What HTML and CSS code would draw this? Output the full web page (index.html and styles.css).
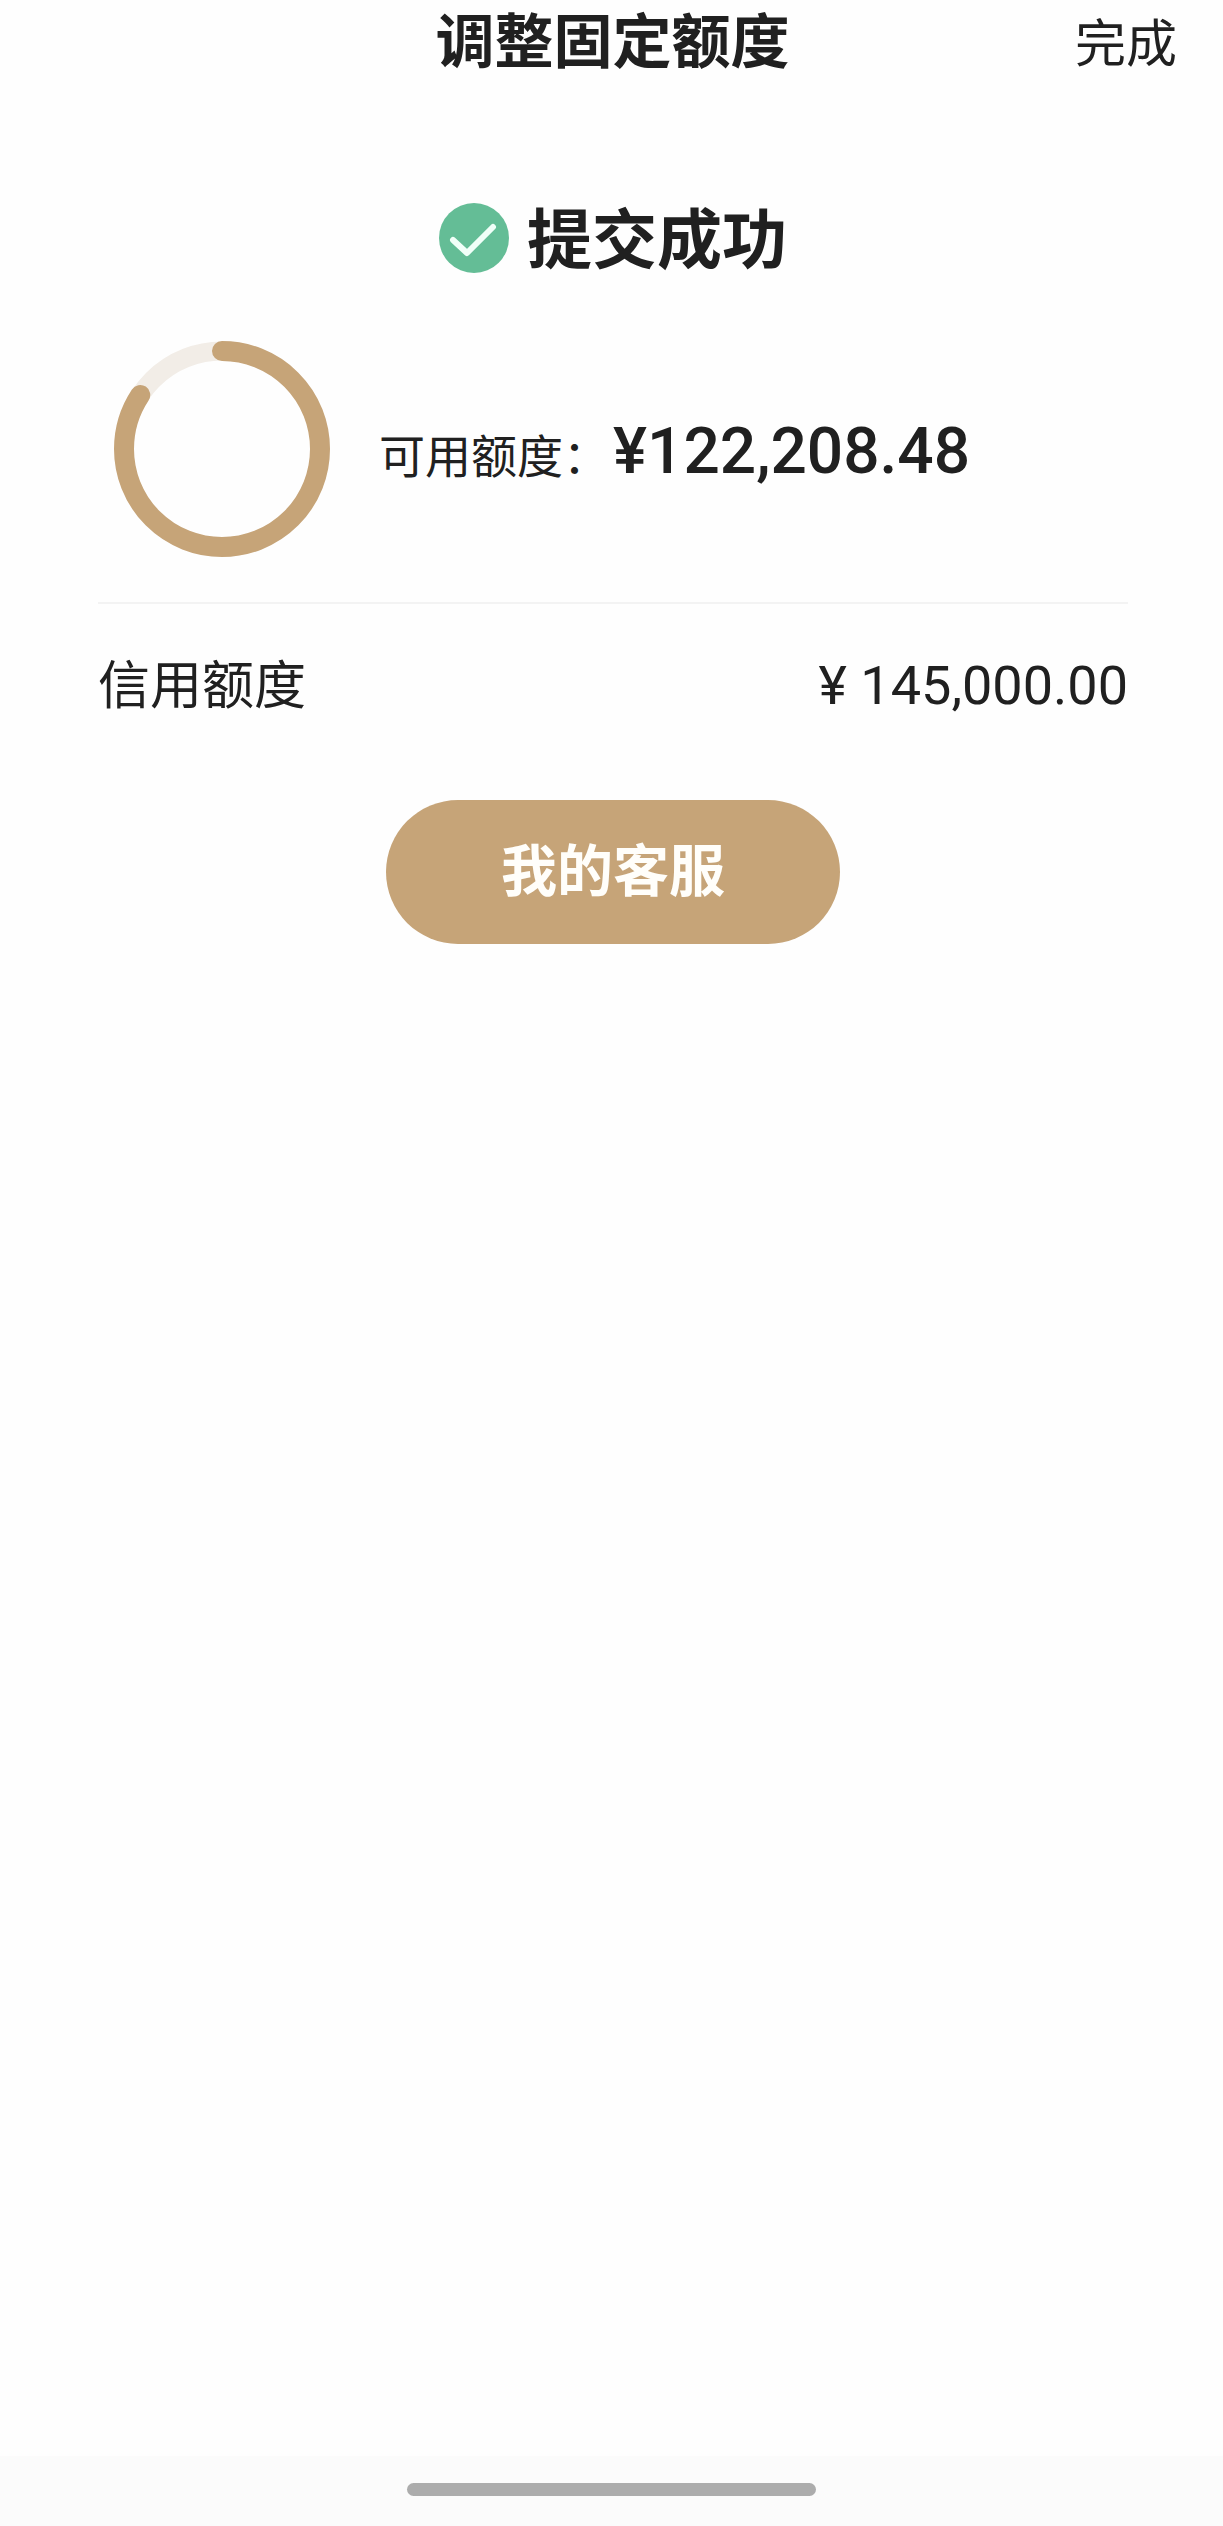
FILE: index.html
```html
<!DOCTYPE html>
<html lang="zh-CN">
<head>
<meta charset="utf-8">
<meta name="viewport" content="width=device-width, initial-scale=1">
<title>调整固定额度</title>
<link rel="stylesheet" href="styles.css">
</head>
<body>
<div class="page">
  <header class="navbar">
    <h1 class="navbar-title">调整固定额度</h1>
    <button class="navbar-done" type="button">完成</button>
  </header>
  <main class="content">
    <div class="status">
      <svg class="status-icon" viewBox="0 0 70 70" aria-hidden="true">
        <circle cx="35" cy="35" r="35" fill="#64bd96"/>
        <path d="M14 37 L28 50 L54 24" fill="none" stroke="#f1fff8" stroke-width="6" stroke-linecap="round" stroke-linejoin="round"/>
      </svg>
      <h2 class="status-text">提交成功</h2>
    </div>
    <section class="available">
      <svg class="ring" viewBox="0 0 216 216" aria-hidden="true">
        <circle cx="108" cy="108" r="98" fill="none" stroke="#f2ede7" stroke-width="19"/>
        <circle cx="108" cy="108" r="98" fill="none" stroke="#c6a478" stroke-width="20" stroke-linecap="round" pathLength="1000" stroke-dasharray="843 1000" transform="rotate(-90 108 108)"/>
      </svg>
      <p class="available-line"><span class="available-label">可用额度：</span><span class="available-amount">¥122,208.48</span></p>
    </section>
    <section class="credit">
      <span>信用额度</span>
      <span class="credit-amount">¥ 145,000.00</span>
    </section>
    <button class="service" type="button">我的客服</button>
  </main>
  <footer class="home-area"><div class="home-bar"></div></footer>
</div>
</body>
</html>
```
FILE: styles.css
```css
* {
  box-sizing: border-box;
}

body {
  margin: 0;
  background: #fefefe;
  color: #202020;
  font-family: "Noto Sans CJK SC", sans-serif;
}

h1,
h2,
p {
  margin: 0;
}

button {
  border: 0;
  padding: 0;
  background: none;
  color: inherit;
  font-family: inherit;
}

.page {
  display: flex;
  flex-direction: column;
  min-height: 100vh;
}

.navbar {
  display: grid;
  grid-template-columns: 1fr auto 1fr;
  align-items: start;
  height: 80px;
  padding: 0 46px 0 48px;
}

.navbar-title {
  grid-column: 2;
  font-size: 59px;
  line-height: 76px;
  font-weight: 700;
}

.navbar-done {
  justify-self: end;
  font-size: 51px;
  line-height: 80px;
}

.content {
  flex: 1;
  display: flex;
  flex-direction: column;
  padding: 117px 95px 0 98px;
}

.status {
  display: flex;
  align-items: flex-end;
  justify-content: center;
  gap: 18px;
  padding-bottom: 13px;
}

.status-icon {
  width: 70px;
  height: 70px;
}

.status-text {
  font-size: 65px;
  line-height: 76px;
  font-weight: 700;
}

.available {
  display: flex;
  align-items: center;
  gap: 49px;
  padding: 55px 16px 45px;
  border-bottom: 2px solid #f3f3f3;
}

.ring {
  flex: none;
  width: 216px;
  height: 216px;
}

.available-line {
  padding-top: 6px;
}

.available-label {
  font-size: 46px;
}

.available-amount {
  margin-left: 4px;
  font-family: Roboto, sans-serif;
  font-size: 64px;
  line-height: 80px;
  font-weight: 500;
}

.credit {
  display: flex;
  justify-content: space-between;
  align-items: baseline;
  padding-top: 38px;
  font-size: 52px;
  line-height: 80px;
}

.credit-amount {
  font-family: Roboto, sans-serif;
  font-size: 54px;
}

.service {
  align-self: center;
  margin-top: 74px;
  padding: 27px 115px 37px;
  border-radius: 72px;
  background: #c6a478;
  color: #fffefa;
  font-size: 56px;
  line-height: 80px;
  font-weight: 700;
}

.home-area {
  display: flex;
  justify-content: center;
  padding: 27px 0 30px;
  background: #fbfbfb;
}

.home-bar {
  width: 33.4%;
  height: 13px;
  border-radius: 7px;
  background: #acacac;
}
```
